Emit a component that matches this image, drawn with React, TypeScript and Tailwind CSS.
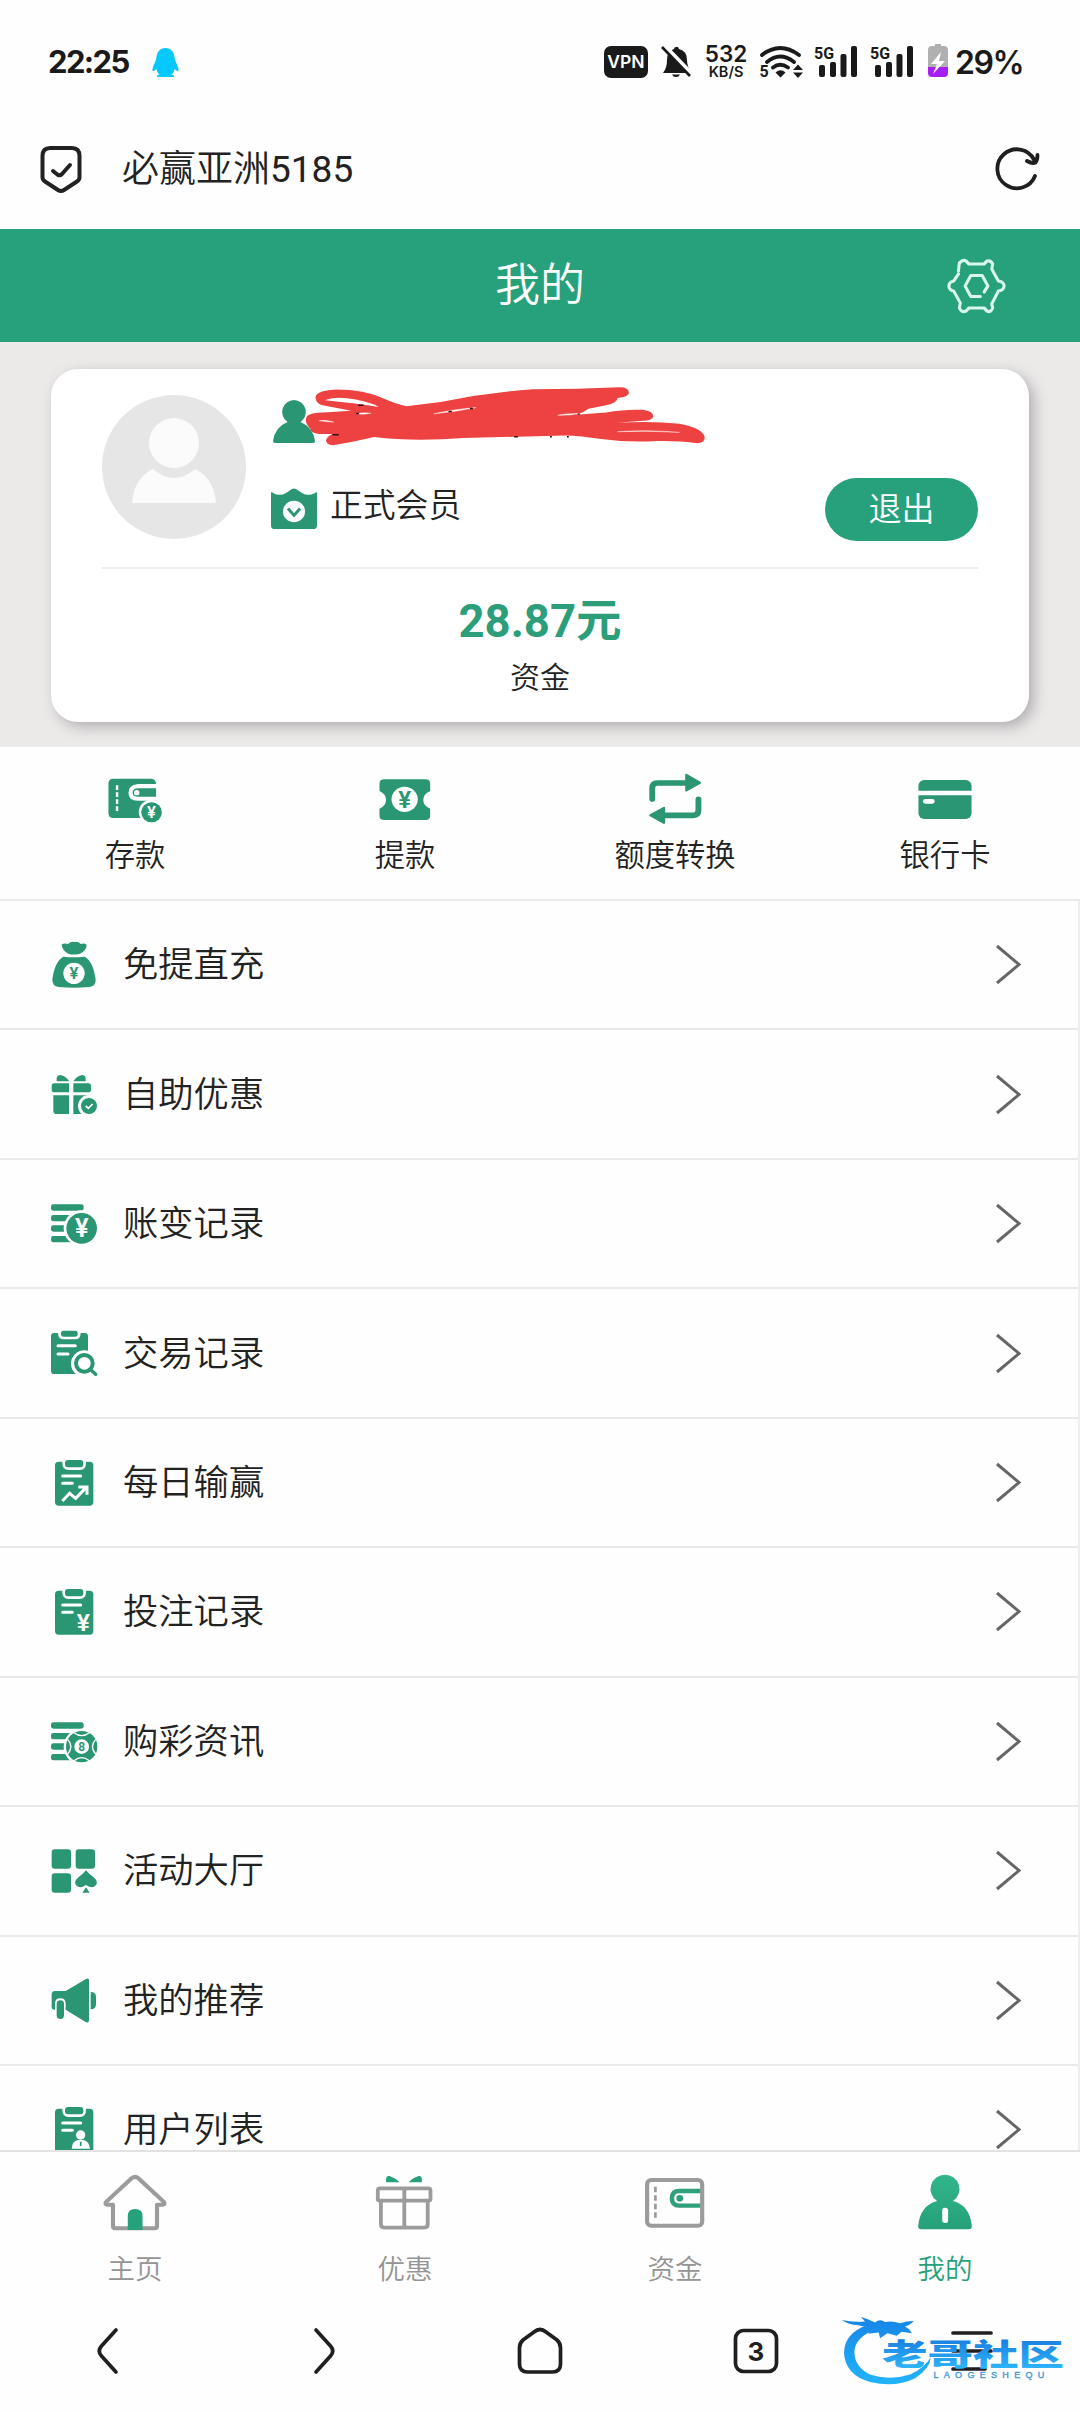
import type { ReactNode } from "react";

const G = "#2a9673";

function Yen({ x, y, size, fill }: { x: number; y: number; size: number; fill: string }) {
  return (
    <text x={x} y={y} fontSize={size} fill={fill} textAnchor="middle" fontFamily="Roboto, sans-serif" fontWeight="600">
      ¥
    </text>
  );
}

function Clipboard({ children }: { children?: ReactNode }) {
  return (
    <>
      <rect x="15" y="8" width="115" height="132" rx="11" fill={G} />
      <path d="M37 4V12Q37 33 56 33H89Q108 33 108 12V4Z" fill="#fff" />
      <rect x="45" y="3" width="55" height="22" rx="9" fill={G} />
      <path d="M38 51H92M38 73H67" stroke="#fff" strokeWidth="9" strokeLinecap="round" />
      {children}
    </>
  );
}

function Bars() {
  return (
    <g fill={G}>
      <rect x="3" y="13" width="98" height="19" rx="7" />
      <rect x="3" y="45" width="80" height="19" rx="7" />
      <rect x="3" y="76" width="60" height="19" rx="7" />
      <rect x="3" y="108" width="75" height="19" rx="7" />
    </g>
  );
}

const rows: { label: string; icon: ReactNode }[] = [
  {
    label: "免提直充",
    icon: (
      <g fill={G}>
        <path d="M35 10Q44 5 54 9Q62 1 73 3Q86 1 92 9Q103 5 110 11Q109 29 90 38Q72 43 56 39Q36 29 35 10Z" />
        <path d="M40 47Q72 50 105 47Q130 62 137 115Q138 136 118 138Q72 143 26 138Q6 136 7 115Q14 62 40 47Z" />
        <circle cx="72" cy="97" r="32" fill="#fff" />
        <Yen x={72} y={115} size={50} fill={G} />
      </g>
    ),
  },
  {
    label: "自助优惠",
    icon: (
      <g fill={G}>
        <path d="M20 31Q18 12 31 12Q47 15 58 31ZM107 31Q109 12 97 12Q80 15 70 31Z" />
        <path d="M13 37H57V64H13Q5 64 5 56V45Q5 37 13 37ZM70 37H115Q123 37 123 45V56Q123 64 115 64H70Z" />
        <path d="M10 73H57V129H20Q10 129 10 119ZM70 73H116V129H70Z" />
        <circle cx="117" cy="105" r="33" fill="#fff" />
        <circle cx="117" cy="105" r="24" />
        <path d="M107 105L115 112L128 99" stroke="#fff" strokeWidth="5" fill="none" />
      </g>
    ),
  },
  {
    label: "账变记录",
    icon: (
      <>
        <Bars />
        <circle cx="95" cy="85" r="54" fill="#fff" />
        <circle cx="95" cy="85" r="46" fill={G} />
        <Yen x={95} y={112} size={76} fill="#fff" />
      </>
    ),
  },
  {
    label: "交易记录",
    icon: (
      <>
        <rect x="3" y="9" width="111" height="123" rx="10" fill={G} />
        <path d="M24 2V8Q24 28 42 28H75Q92 28 92 8V2Z" fill="#fff" />
        <rect x="33" y="2" width="50" height="18" rx="7" fill={G} />
        <path d="M24 47H76M24 72H54" stroke="#fff" strokeWidth="9" strokeLinecap="round" />
        <circle cx="103" cy="101" r="40" fill="#fff" />
        <path d="M115 135H145V110H128Z" fill="#fff" />
        <circle cx="103" cy="100" r="25" fill="none" stroke={G} strokeWidth="12" />
        <path d="M121 118L137 133" stroke={G} strokeWidth="10" strokeLinecap="round" />
      </>
    ),
  },
  {
    label: "每日输赢",
    icon: (
      <Clipboard>
        <path d="M37 126L59 103L77 118L108 86M85 84H111V107" stroke="#fff" strokeWidth="9" fill="none" />
      </Clipboard>
    ),
  },
  {
    label: "投注记录",
    icon: (
      <Clipboard>
        <Yen x={100} y={129} size={74} fill="#fff" />
      </Clipboard>
    ),
  },
  {
    label: "购彩资讯",
    icon: (
      <>
        <Bars />
        <circle cx="95" cy="86" r="54" fill="#fff" />
        <circle cx="95" cy="86" r="47" fill={G} />
        <g fill={G} stroke="#fff" strokeWidth="4">
          <path d="M72 44Q95 62 118 44" />
          <path d="M72 128Q95 110 118 128" />
          <path d="M53 64Q72 86 53 108" />
          <path d="M137 64Q118 86 137 108" />
        </g>
        <circle cx="95" cy="86" r="22" fill="#fff" />
        <text x="95" y="99" fontSize="36" fill={G} textAnchor="middle" fontFamily="Roboto, sans-serif" fontWeight="600">
          8
        </text>
      </>
    ),
  },
  {
    label: "活动大厅",
    icon: (
      <g fill={G}>
        <rect x="5" y="7" width="58" height="58" rx="9" />
        <rect x="77" y="7" width="58" height="58" rx="9" />
        <rect x="5" y="79" width="58" height="58" rx="9" />
        <path d="M108 70Q116 80 130 90Q146 103 138 114Q128 128 108 114Q88 128 78 114Q70 103 86 90Q100 80 108 70Z" />
        <path d="M108 121L97 137H119Z" />
      </g>
    ),
  },
  {
    label: "我的推荐",
    icon: (
      <g fill={G}>
        <path d="M5 52Q5 43 14 42H47L108 6Q117 2 117 10V130Q117 139 108 136L47 98H14Q5 98 5 90Z" />
        <path d="M15 104V80Q15 64 31 64Q47 64 47 80V128H15Z" fill="#fff" />
        <path d="M0 99H16V110H0Z" fill="#fff" />
        <rect x="20" y="70" width="22" height="56" rx="11" />
        <path d="M122 45Q138 45 138 60V82Q138 97 122 97Z" />
      </g>
    ),
  },
  {
    label: "用户列表",
    icon: (
      <Clipboard>
        <g fill="#fff">
          <circle cx="92" cy="87" r="14" />
          <path d="M65 128Q66 106 84 102H100Q118 106 120 128Z" />
        </g>
        <path d="M92 107V120" stroke={G} strokeWidth="5" />
      </Clipboard>
    ),
  },
];

const actions: { label: string; box: string; icon: ReactNode }[] = [
  {
    label: "存款",
    box: "305 90 174 180",
    icon: (
      <>
        <path d="M329 116H440Q453 118 453 132H400Q373 135 373 158Q373 182 400 182H455V234H329Q315 234 315 220V130Q315 116 329 116Z" fill={G} />
        <path d="M340 136V214" stroke="#fff" strokeWidth="7" strokeDasharray="14 7" />
        <path d="M453 145H402Q385 145 385 158Q385 170 402 170H453Z" fill={G} />
        <circle cx="397" cy="158" r="8" fill="#fff" />
        <circle cx="440" cy="216" r="37" fill="#fff" />
        <circle cx="440" cy="217" r="30" fill={G} />
        <Yen x={440} y={234} size={48} fill="#fff" />
      </>
    ),
  },
  {
    label: "提款",
    box: "1089 90 174 180",
    icon: (
      <>
        <path d="M1116 118H1235Q1249 118 1249 131V153Q1229 162 1229 180Q1229 197 1249 206V227Q1249 240 1235 240H1116Q1102 240 1102 227V206Q1121 197 1121 180Q1121 162 1102 153V131Q1102 118 1116 118Z" fill={G} />
        <circle cx="1175" cy="178" r="38" fill="#fff" />
        <Yen x={1175} y={203} size={70} fill={G} />
      </>
    ),
  },
  {
    label: "额度转换",
    box: "305 90 174 180",
    icon: (
      <>
        <path d="M326 177V144Q326 129 341 129H425M460 178V211Q460 226 445 226H360" fill="none" stroke={G} strokeWidth="17" strokeLinecap="round" />
        <path d="M425 105L464 128L425 151ZM360 204L321 226L360 248Z" fill={G} stroke={G} strokeWidth="7" strokeLinejoin="round" />
      </>
    ),
  },
  {
    label: "银行卡",
    box: "1089 90 174 180",
    icon: (
      <>
        <rect x="1099" y="120" width="154" height="117" rx="17" fill={G} />
        <path d="M1095 159H1257" stroke="#fff" strokeWidth="14" />
        <rect x="1112" y="177" width="34" height="14" rx="7" fill="#fff" />
      </>
    ),
  },
];

const tabs: { label: string; box: string; active?: boolean; icon: ReactNode }[] = [
  {
    label: "主页",
    box: "299 120 186 192",
    icon: (
      <>
        <path d="M328 224H310Q303 222 309 215L383 144Q392 137 401 144L475 215Q481 222 474 224H456V288Q456 295 449 295H335Q328 295 328 288Z" fill="none" stroke="#9b9b9b" strokeWidth="12" strokeLinejoin="round" />
        <path d="M371 300V258Q371 237 392 237Q414 237 414 258V300Z" fill="#27a17b" />
      </>
    ),
  },
  {
    label: "优惠",
    box: "1083 120 186 192",
    icon: (
      <>
        <g fill="none" stroke="#9b9b9b" strokeWidth="11">
          <rect x="1097" y="175" width="153" height="37" rx="6" />
          <path d="M1106 213V283Q1106 293 1116 293H1232Q1242 293 1242 283V213M1174 175V293" />
        </g>
        <path d="M1121 157V145Q1123 136 1131 138Q1148 144 1160 157ZM1225 157V145Q1223 136 1215 138Q1198 144 1187 157Z" fill="#27a17b" />
      </>
    ),
  },
  {
    label: "资金",
    box: "299 120 186 192",
    icon: (
      <>
        <path d="M467 183H404Q383 183 383 205Q383 227 404 227H467" fill="none" stroke="#2f9f7c" strokeWidth="13" />
        <circle cx="406" cy="205" r="10" fill="#2f9f7c" />
        <rect x="311" y="150" width="160" height="137" rx="12" fill="none" stroke="#9b9b9b" strokeWidth="12" />
        <path d="M335 170V265" stroke="#9b9b9b" strokeWidth="8" strokeDasharray="17 8.5" />
      </>
    ),
  },
  {
    label: "我的",
    box: "1083 120 186 192",
    active: true,
    icon: (
      <>
        <defs>
          <linearGradient id="me" x1="0" y1="0" x2="0" y2="1">
            <stop offset="0" stopColor="#32b58b" />
            <stop offset="1" stopColor="#26a07a" />
          </linearGradient>
        </defs>
        <path d="M1176 134A42 43 0 0 1 1199 213Q1248 226 1254 288Q1254 298 1245 298H1107Q1098 298 1098 288Q1104 226 1153 213A42 43 0 0 1 1176 134Z" fill="url(#me)" />
        <rect x="1168" y="233" width="17" height="46" rx="8" fill="#fff" />
      </>
    ),
  },
];

function Signal() {
  return (
    <svg className="h-[34px] w-[45px] overflow-visible" viewBox="0 0 45 34" fill="#1a1a1a">
      <text x="0" y="14.5" fontSize="17" fontWeight="700" fontFamily="Roboto, sans-serif" textLength="20" lengthAdjust="spacingAndGlyphs">
        5G
      </text>
      <rect x="5" y="21" width="6" height="12" rx="2" />
      <rect x="16" y="18" width="6" height="15" rx="2" />
      <rect x="26.500" y="10" width="6" height="23" rx="2" />
      <rect x="37" y="2" width="6" height="31" rx="2" />
    </svg>
  );
}

function StatusBar() {
  return (
    <div className="flex h-[109px] shrink-0 items-start pt-[44px] pl-[48px] text-[#1a1a1a]">
      <div className="h-[34px] w-[104px] font-[Inter] text-[31px] leading-[36px] font-bold tracking-[-1.6px]">22:25</div>
      <svg className="h-[34px] w-[27px]" viewBox="0 0 27 34" fill="#06c8fd">
        <path d="M13.500 4C19 4 22 8 22.500 13C23 18 27 23 26.500 26.500C26 28.500 24 26 22.500 25C22 28 21 29.500 19.500 31C23 31 22.500 33 21 33H6C4.500 33 4 31 7.500 31C6 29.500 5 28 4.500 25C3 26 1 28.500 .5 26.500C0 23 4 18 4.500 13C5 8 8 4 13.500 4Z" />
      </svg>
      <div className="mt-[2px] ml-[425px] flex h-[32px] w-[44px] items-center justify-center rounded-[7px] bg-[#1a1a1a] font-[Inter] text-[17.500px] font-semibold text-white">
        VPN
      </div>
      <svg className="ml-[12px] h-[34px] w-[34px]" viewBox="0 0 34 34">
        <path d="M16 3Q18 2 19 5Q27 7 27 16Q27 22 31 29H3Q7 24 7 16Q7 7 14 5Q14 3 16 3ZM12 30.500H20Q19 33 16 33Q13 33 12 30.500Z" fill="#1a1a1a" />
        <path d="M4 1L33 31" stroke="#fff" strokeWidth="4" />
        <path d="M2 3L30 32" stroke="#1a1a1a" strokeWidth="2.600" />
      </svg>
      <div className="ml-[11px] flex h-[36px] w-[42px] flex-col items-center font-[Inter] font-semibold">
        <span className="h-[20px] text-[22.500px] leading-[20px]">532</span>
        <span className="h-[15px] text-[14.500px] leading-[15px] whitespace-nowrap">KB/S</span>
      </div>
      <svg className="ml-[12px] h-[34px] w-[45px] overflow-visible" viewBox="0 0 45 34">
        <g fill="none" stroke="#1a1a1a" strokeWidth="3.800" strokeLinecap="round">
          <path d="M3 11Q21 -3 40 11M8 18Q21 7 35 18M14 23.500Q21 18 29 23.500" />
        </g>
        <path d="M16.500 28.500Q21.500 24 26.500 28.500L21.500 33.500ZM34 26L39 20.500L44 26ZM34 28.500L39 34L44 28.500Z" fill="#1a1a1a" />
        <text x="0.5" y="33" fontSize="16" fontWeight="700" fontFamily="Roboto, sans-serif" fill="#1a1a1a">
          5
        </text>
      </svg>
      <div className="ml-[10px] flex gap-[11px]">
        <Signal />
        <Signal />
      </div>
      <svg className="ml-[13px] h-[34px] w-[20px]" viewBox="0 0 20 34">
        <path d="M7 0H13V2H16Q20 2 20 6V24H0V6Q0 2 4 2H7Z" fill="#b0b0b0" />
        <path d="M0 23H20V29Q20 33 16 33H4Q0 33 0 29Z" fill="#a51ff5" />
        <path d="M13 8L3 20H9L5 30L17 17H11Z" fill="#fff" />
      </svg>
      <div className="ml-[7px] font-[Inter] text-[32px] leading-[37px] font-semibold tracking-[-1.4px]">29%</div>
    </div>
  );
}

function ProfileCard() {
  return (
    <section className="h-[405px] shrink-0 bg-[#ebeae9] px-[51px] pt-[27px]">
      <div className="relative flex h-[353px] flex-col rounded-[27px] bg-white px-[51px] shadow-[5px_5px_14px_rgba(90,80,85,0.38)]">
        <div className="flex h-[200px] shrink-0 border-b-[2px] border-[#ededed] pt-[26px]">
          <svg className="h-[144px] w-[144px]" viewBox="0 0 144 144">
            <circle cx="72" cy="72" r="72" fill="#e6e6e6" />
            <ellipse cx="72" cy="48" rx="25" ry="25" fill="#fbfbfb" />
            <path d="M30 108Q32 83 51 74Q72 92 93 74Q112 83 114 108Z" fill="#fbfbfb" />
          </svg>
          <div className="ml-[25px] flex flex-1 flex-col">
            <svg className="mt-[5px] h-[46px] w-[46px]" viewBox="0 0 46 46" fill={G}>
              <path d="M23 0A12 12 0 0 1 29.500 22Q42 27 44 41Q44 43 42 43H4Q2 43 2 41Q4 27 16.500 22A12 12 0 0 1 23 0Z" />
            </svg>
            <div className="mt-[42px] flex">
              <svg className="h-[43px] w-[46px]" viewBox="0 0 46 44" preserveAspectRatio="none">
                <path d="M0 6Q0 3 2 5Q9 9 15 5L21 1Q23 0 25 1L31 5Q37 9 44 5Q46 3 46 6V38Q46 42 42 42H4Q0 42 0 38Z" fill={G} />
                <circle cx="23" cy="24" r="11" fill="#fff" />
                <path d="M17 21L23 28L29 21" stroke={G} strokeWidth="3" fill="none" />
              </svg>
              <div className="ml-[13px] text-[32.800px] leading-[36px] font-[350] text-[#222]">正式会员</div>
            </div>
          </div>
          <button className="mt-[83px] h-[63px] w-[153px] rounded-full bg-[#27a17b] text-[33px] leading-[63px] font-[350] text-white">退出</button>
        </div>
        <div className="mt-[28px] text-center text-[45.500px] leading-[50px] font-bold text-[#2c9e7a]">28.87元</div>
        <div className="mt-[13px] text-center text-[30px] leading-[36px] font-[350] text-[#222]">资金</div>
        <svg className="absolute top-[15px] left-[252px] h-[63px] w-[404px]" viewBox="660 460 880 190" preserveAspectRatio="none">
          <path
            d="M688 506Q682 482 725 477Q790 475 838 505Q862 520 885 527L960 514Q1060 486 1160 476Q1260 476 1350 470Q1370 470 1370 487Q1369 499 1345 502Q1345 517 1320 524L1282 535Q1270 548 1255 553L1320 546Q1365 535 1400 538Q1423 542 1423 558Q1422 570 1400 571L1345 577Q1420 571 1480 580Q1535 595 1535 623Q1534 638 1520 639Q1480 631 1430 632Q1370 637 1310 626Q1265 616 1230 615L1010 623Q900 635 815 620Q770 635 725 645Q711 643 710 630Q712 618 725 611H695Q676 608 676 595Q660 572 670 555Q680 546 705 546L765 541L700 523Q689 517 688 506Z"
            fill="#ee4141"
          />
          <path d="M708 509Q730 495 775 507Q810 517 825 529Q780 519 708 509Z" fill="#fff" />
          <path d="M780 550Q788 545 808 548Q790 553 780 550ZM945 550Q980 538 1037 531Q990 545 945 550ZM1215 554Q1235 548 1262 549Q1240 556 1215 554ZM1345 604Q1410 597 1480 606Q1410 600 1345 604ZM695 571Q710 567 727 575Q710 574 695 571Z" fill="#fff" stroke="#fff" strokeWidth="1" />
          <path d="M776 549H782M977 543H984M1024 534H1030M1258 551H1263M724 613H738M1120 619H1128M1200 617V621M1237 617V621M780 524H792" stroke="#301010" strokeWidth="4" />
        </svg>
      </div>
    </section>
  );
}

function BrowserNav() {
  return (
    <nav className="relative grid h-[124px] shrink-0 grid-cols-5">
      {[
        <path key="b" d="M34 5L19.500 21Q15 26 19.500 31L34 47" />,
        <path key="f" d="M18 5L32.500 21Q37 26 32.500 31L18 47" />,
        <path key="h" d="M5.500 23Q5.500 18 9 15L20 7Q26 2 32 7L43 15Q46.500 18 46.500 23V39Q46.500 47 38.500 47H13.500Q5.500 47 5.500 39Z" />,
        <g key="t">
          <rect x="5.500" y="5.500" width="41" height="41" rx="8" />
          <text x="26" y="35.500" textAnchor="middle" fontSize="26" fontWeight="700" fontFamily="Inter, sans-serif" fill="#1f1f1f" stroke="none">
            3
          </text>
        </g>,
        <path key="m" d="M7 8H45M7 26H45M7 44H39" />,
      ].map((icon, i) => (
        <div key={i} className="flex justify-center pt-[37px]">
          <svg className="h-[52px] w-[52px]" viewBox="0 0 52 52" fill="none" stroke="#1f1f1f" strokeWidth="3.700" strokeLinecap="round" strokeLinejoin="round">
            {icon}
          </svg>
        </div>
      ))}
      <svg className="absolute top-[25px] left-[840px] h-[77px] w-[227px]" viewBox="120 100 680 230">
        <defs>
          <linearGradient id="wm" x1="0" y1="110" x2="0" y2="315" gradientUnits="userSpaceOnUse">
            <stop offset="0" stopColor="#1684e6" />
            <stop offset="1" stopColor="#22b4fb" />
          </linearGradient>
          <linearGradient id="wt" x1="0" y1="178" x2="0" y2="265" gradientUnits="userSpaceOnUse">
            <stop offset="0" stopColor="#1b7fe0" />
            <stop offset="1" stopColor="#2db4fb" />
          </linearGradient>
        </defs>
        <g fill="url(#wm)">
          <path d="M205 134Q132 160 132 220Q136 285 210 306Q285 325 345 295Q390 265 392 232Q375 262 330 284Q270 303 212 285Q163 262 163 215Q166 172 225 150Z" />
          <path d="M126 121Q155 128 195 125L183 112Q205 118 225 128Q240 116 255 127Q275 122 300 130Q320 124 341 124Q332 136 315 140Q330 148 335 160L305 156L290 168L262 160L240 175L236 158L205 162L215 145L175 136Q145 136 126 121Z" />
        </g>
        <text x="246" y="255" fontSize="88" fontWeight="900" fontFamily="'Noto Sans CJK SC', sans-serif" fill="url(#wt)" textLength="545" lengthAdjust="spacingAndGlyphs">
          老哥社区
        </text>
        <text x="400" y="294" fontSize="27" fontFamily="'Liberation Sans', sans-serif" fill="#3a97e0" stroke="#3a97e0" strokeWidth="1" textLength="332">
          LAOGESHEQU
        </text>
      </svg>
    </nav>
  );
}

export default function App() {
  return (
    <div className="flex h-[2412px] w-[1080px] flex-col overflow-hidden bg-[#fefefe] font-[Roboto,'Noto_Sans_CJK_SC',sans-serif]">
      <StatusBar />
      <div className="flex h-[120px] shrink-0 items-center px-[38px]">
        <svg className="h-[50px] w-[46px]" viewBox="0 0 46 50" fill="none" stroke="#222" strokeWidth="4" strokeLinecap="round" strokeLinejoin="round">
          <path d="M12 4H34Q41.500 4 41.500 12V33Q41.500 36 39 37.500L26 46Q23 48 20 46L7 37.500Q4.500 36 4.500 33V12Q4.500 4 12 4Z" />
          <path d="M15 27L20 31Q22 32 24 30L32 21" />
        </svg>
        <div className="ml-[38px] flex-1 pt-[2px] text-[37px] leading-[44px] font-[350] text-[#222]">
          必赢亚洲<span className="font-normal">5185</span>
        </div>
        <svg className="mr-[-1px] h-[50px] w-[50px]" viewBox="0 0 50 50" fill="none" stroke="#1f1f1f" strokeWidth="3.800" strokeLinecap="round" strokeLinejoin="round">
          <path d="M42 32A19.500 19.500 0 1 1 41 15.500M34 17Q39.500 20 42.500 18.500Q44.500 16 44.500 11" />
        </svg>
      </div>
      <header className="relative flex h-[113px] shrink-0 items-center justify-center bg-[#27a17b] text-[45px] leading-[50px] font-[350] text-white">
        我的
        <svg className="absolute top-[29px] left-[947px] h-[56px] w-[59px]" viewBox="0 0 62 56" preserveAspectRatio="none" fill="none" stroke="#d9f7ea" strokeWidth="3.200" strokeLinejoin="round" strokeLinecap="round">
          <path d="M12 13L13 5Q17 1 20 3L23 6H39L42 3Q46 2 48 6L47 11L54 23Q60 24 60 28Q60 32 54 33L47 46L48 50Q46 55 42 53L39 50H23L20 53Q15 55 13 50L14 45L7 33Q2 32 2 28Q2 24 7 23L12 16" />
          <path d="M35 38.500H25L19 28L25 17.500H37L43 28L39 34" />
        </svg>
      </header>
      <ProfileCard />
      <section className="grid h-[154px] shrink-0 grid-cols-4 border-b-[2px] border-[#eaeaea]">
        {actions.map((a) => (
          <div key={a.label} className="flex flex-col items-center pt-[23px]">
            <svg className="h-[60px] w-[60px]" viewBox={a.box} preserveAspectRatio="none">
              {a.icon}
            </svg>
            <div className="mt-[8px] text-[30.300px] leading-[36px] font-[350] text-[#222]">{a.label}</div>
          </div>
        ))}
      </section>
      <ul className="h-[1249px] shrink-0 overflow-hidden border-r-[2px] border-[#ededed]">
        {rows.map((r) => (
          <li key={r.label} className="flex h-[129.450px] items-center border-b-[2px] border-[#e9e9e9] pt-[1px] pr-[54px] pl-[50px]">
            <svg className="h-[48px] w-[48px]" viewBox="0 0 144 144">
              {r.icon}
            </svg>
            <div className="ml-[25px] flex-1 text-[35.300px] leading-[42px] font-[350] text-[#222]">{r.label}</div>
            <svg className="h-[44px] w-[30px]" viewBox="0 0 30 44" fill="none" stroke="#666" strokeWidth="3">
              <path d="M3 3L25 21.500L3 40" />
            </svg>
          </li>
        ))}
      </ul>
      <nav className="grid h-[138px] shrink-0 grid-cols-4 border-t-[2px] border-[#e2e2e2]">
        {tabs.map((t) => (
          <div key={t.label} className="flex flex-col items-center pt-[18px]">
            <svg className="h-[64px] w-[64px]" viewBox={t.box} preserveAspectRatio="none">
              {t.icon}
            </svg>
            <div className={t.active ? "mt-[20px] text-[27.500px] leading-[32px] font-[350] text-[#27a17b]" : "mt-[20px] text-[27.500px] leading-[32px] font-[350] text-[#949494]"}>{t.label}</div>
          </div>
        ))}
      </nav>
      <BrowserNav />
    </div>
  );
}
